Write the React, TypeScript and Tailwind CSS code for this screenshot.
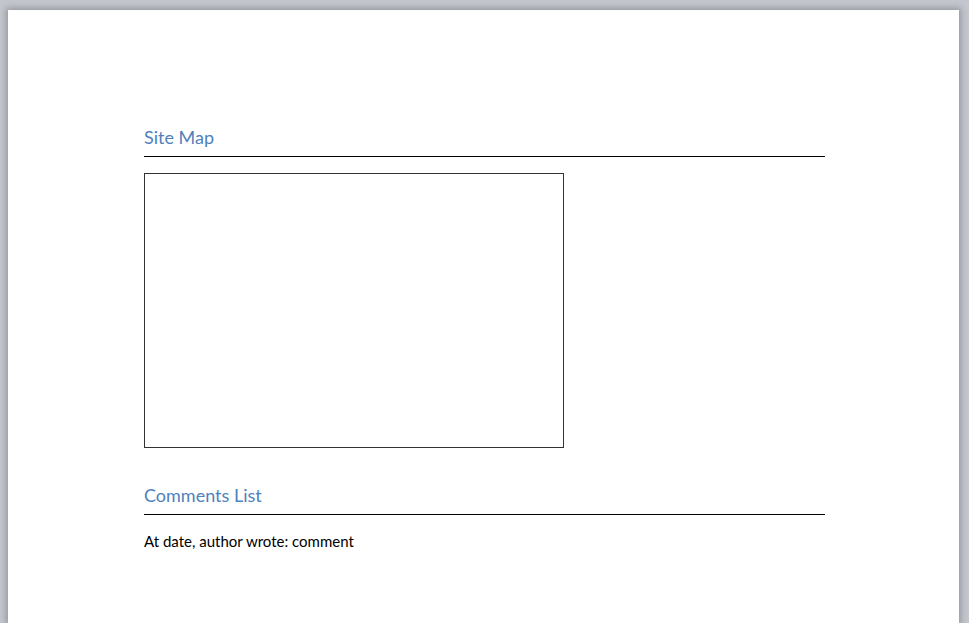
export default function App() {
  return (
    <div className="w-[969px] h-[623px] overflow-hidden bg-[#c3c6cc] pt-[10px] pl-[8px] pr-[10px]" style={{ fontFamily: "Lato, 'Open Sans', sans-serif" }}>
      <div className="h-[613px] w-[951px] bg-white shadow-[0_0_6px_2px_rgba(90,95,105,0.45)] pl-[136px] pt-[113px]">
        <div className="w-[681px]">
          <h2 className="text-[18px] leading-[28px] text-[#4f81bd] pb-[5px] border-b border-black">Site Map</h2>
          <div className="mt-[16px] w-[420px] h-[275px] border border-[#333]" />
          <h2 className="mt-[33px] text-[18px] leading-[28px] text-[#4f81bd] pb-[5px] border-b border-black">Comments List</h2>
          <p className="mt-[16px] text-[15px] leading-[20px] text-black">At date, author wrote: comment</p>
        </div>
      </div>
    </div>
  );
}
